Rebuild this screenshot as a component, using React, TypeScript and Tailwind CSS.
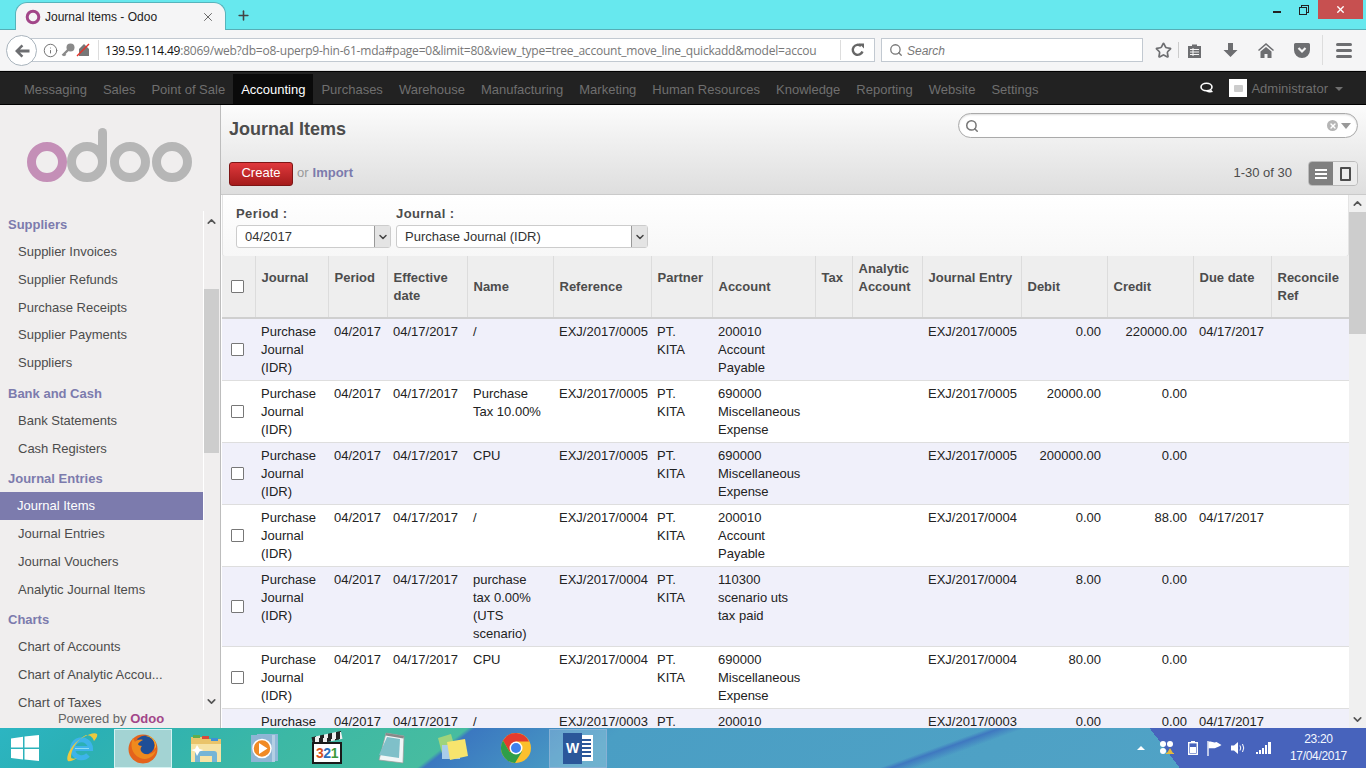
import { ChevronDown, ChevronUp, Info, Search, Star, X, Plus } from 'lucide-react'

const NAV_ITEMS = [
  'Messaging', 'Sales', 'Point of Sale', 'Accounting', 'Purchases', 'Warehouse', 'Manufacturing',
  'Marketing', 'Human Resources', 'Knowledge', 'Reporting', 'Website', 'Settings',
]

const COLUMNS = [
  { label: 'Journal', width: 'w-[73px]', top: 'pt-[13px]' },
  { label: 'Period', width: 'w-[59px]', top: 'pt-[13px]' },
  { label: 'Effective date', width: 'w-[80px]', top: 'pt-[13px]' },
  { label: 'Name', width: 'w-[86px]', top: 'pt-[22px]' },
  { label: 'Reference', width: 'w-[98px]', top: 'pt-[22px]' },
  { label: 'Partner', width: 'w-[61px]', top: 'pt-[13px]' },
  { label: 'Account', width: 'w-[103px]', top: 'pt-[22px]' },
  { label: 'Tax', width: 'w-[37px]', top: 'pt-[13px]' },
  { label: 'Analytic Account', width: 'w-[70px]', top: 'pt-[4px]' },
  { label: 'Journal Entry', width: 'w-[99px]', top: 'pt-[13px]' },
  { label: 'Debit', width: 'w-[86px]', top: 'pt-[22px]' },
  { label: 'Credit', width: 'w-[86px]', top: 'pt-[22px]' },
  { label: 'Due date', width: 'w-[78px]', top: 'pt-[13px]' },
  { label: 'Reconcile Ref', width: 'w-[78px]', top: 'pt-[13px]' },
]

const ROWS = [
  { name: '/', ref: 'EXJ/2017/0005', account: '200010 Account Payable', debit: '0.00', credit: '220000.00', due: '04/17/2017' },
  { name: 'Purchase Tax 10.00%', ref: 'EXJ/2017/0005', account: '690000 Miscellaneous Expense', debit: '20000.00', credit: '0.00', due: '' },
  { name: 'CPU', ref: 'EXJ/2017/0005', account: '690000 Miscellaneous Expense', debit: '200000.00', credit: '0.00', due: '' },
  { name: '/', ref: 'EXJ/2017/0004', account: '200010 Account Payable', debit: '0.00', credit: '88.00', due: '04/17/2017' },
  { name: 'purchase tax 0.00% (UTS scenario)', ref: 'EXJ/2017/0004', account: '110300 scenario uts tax paid', debit: '8.00', credit: '0.00', due: '' },
  { name: 'CPU', ref: 'EXJ/2017/0004', account: '690000 Miscellaneous Expense', debit: '80.00', credit: '0.00', due: '' },
  { name: '/', ref: 'EXJ/2017/0003', account: '200010 Account Payable', debit: '0.00', credit: '0.00', due: '04/17/2017' },
]

const MENU = [
  { title: 'Suppliers', items: ['Supplier Invoices', 'Supplier Refunds', 'Purchase Receipts', 'Supplier Payments', 'Suppliers'] },
  { title: 'Bank and Cash', items: ['Bank Statements', 'Cash Registers'] },
  { title: 'Journal Entries', items: ['Journal Items', 'Journal Entries', 'Journal Vouchers', 'Analytic Journal Items'] },
  { title: 'Charts', items: ['Chart of Accounts', 'Chart of Analytic Accou...', 'Chart of Taxes'] },
]

function OdooLogo() {
  return (
    <svg width="170" height="58" viewBox="0 0 170 58" fill="none" aria-hidden="true">
      <circle cx="20" cy="38" r="15.5" stroke="#c48fb7" strokeWidth="9" />
      <circle cx="60" cy="38" r="15.5" stroke="#b6b6b6" strokeWidth="9" />
      <path d="M75.500 38V8.500" stroke="#b6b6b6" strokeWidth="9" strokeLinecap="round" />
      <circle cx="103" cy="38" r="15.5" stroke="#b6b6b6" strokeWidth="9" />
      <circle cx="145" cy="38" r="15.5" stroke="#b6b6b6" strokeWidth="9" />
    </svg>
  )
}

function WindowControls() {
  return (
    <div className="flex items-start h-full">
      <div className="w-[8px] h-[2px] bg-[#222] mt-[11px] mr-[18px]" />
      <div className="relative w-[10px] h-[10px] mt-[5px] mr-[9px]">
        <div className="absolute left-[2px] top-0 w-[8px] h-[8px] border border-[#222]" />
        <div className="absolute left-0 top-[2px] w-[8px] h-[8px] border border-[#222] bg-[#67e8ee]" />
      </div>
      <div className="w-[45px] h-[19px] bg-[#c75050] flex items-center justify-center mr-[3px]">
        <X size={11} color="#fff" strokeWidth={3} />
      </div>
    </div>
  )
}

function TabStrip() {
  return (
    <div className="h-[30px] bg-[#67e8ee] border-b border-[#56aeb6] flex items-end justify-between shrink-0">
      <div className="flex items-end h-full">
        <div className="ml-[15px] w-[211px] h-[28px] -mb-px bg-[#f5f5f6] rounded-t-[12px] border-t border-x border-[#56b4bc] border-b-0 flex items-center pl-[9px] pr-[10px]">
          <svg width="16" height="16" viewBox="0 0 16 16" fill="none" aria-hidden="true">
            <circle cx="8" cy="8" r="5.8" stroke="#a24689" strokeWidth="3" />
          </svg>
          <span className="ml-[4px] text-[12px] text-[#222] flex-1">Journal Items - Odoo</span>
          <X size={14} color="#555" strokeWidth={1.5} />
        </div>
        <div className="ml-[10px] h-[28px] flex items-center">
          <Plus size={15} color="#444" strokeWidth={2.5} />
        </div>
      </div>
      <WindowControls />
    </div>
  )
}

function Toolbar() {
  return (
    <div className="h-[41px] bg-[#f5f5f6] flex items-center shrink-0 relative pl-[30px] pr-[9px] border-b border-[#e0e0e0]">
      {/* back button sits over the left end of the url bar */}
      <div className="absolute left-[6px] top-[5px] w-[31px] h-[31px] rounded-full bg-white border border-[#a9b4bd] flex items-center justify-center z-10">
        <svg width="16" height="14" viewBox="0 0 16 14" aria-hidden="true">
          <path d="M7.5 0.5L1 7l6.5 6.5 1.8-1.8L6 8.6h9.5V5.4H6l3.3-3.1z" fill="#6d6e71" />
        </svg>
      </div>
      <div className="w-[845px] h-[24px] bg-white border border-[#c2c9d1] flex items-center pl-[12px]">
        <Info size={15} color="#777" strokeWidth={1.6} />
        <svg width="14" height="14" viewBox="0 0 14 14" className="ml-[3px]" aria-hidden="true">
          <circle cx="9.500" cy="4.500" r="4" fill="#8a8a8a" />
          <path d="M7.500 6.500L1.500 12.500M3 11l1.500 1.500" stroke="#8a8a8a" strokeWidth="2.400" />
        </svg>
        <svg width="16" height="14" viewBox="0 0 16 14" className="ml-px" aria-hidden="true">
          <path d="M3 13V6l5-5 5 5v7z" fill="#777" />
          <path d="M1 13L13 1" stroke="#e5332a" strokeWidth="1.5" />
        </svg>
        <div className="w-px h-[20px] bg-[#ddd] ml-[6px]" />
        <div className="w-[712px] ml-[6px] pt-px whitespace-nowrap overflow-hidden text-[12px] text-[#777] font-['Open_Sans',sans-serif] tracking-[-0.22px]">
          <span className="text-[#111]">139.59.114.49</span>
          :8069/web?db=o8-uperp9-hin-61-mda#page=0&amp;limit=80&amp;view_type=tree_account_move_line_quickadd&amp;model=accou
        </div>
        <div className="w-px h-[20px] bg-[#ddd] ml-auto" />
        <div className="w-[33px] flex justify-center">
          <svg width="14" height="14" viewBox="0 0 14 14" fill="none" aria-hidden="true">
            <path d="M11.5 8.5A5 5 0 1 1 10 3" stroke="#666" strokeWidth="2.4" />
            <path d="M8 0.5h5v5z" fill="#666" />
          </svg>
        </div>
      </div>
      <div className="ml-[6px] w-[262px] h-[24px] bg-white border border-[#c2c9d1] flex items-center pl-[7px]">
        <Search size={14} color="#777" strokeWidth={2.2} />
        <span className="ml-[4px] pt-px text-[12px] italic text-[#777]">Search</span>
      </div>
      <Star size={17} color="#6d6e71" strokeWidth={2.4} className="ml-[12px]" />
      <div className="w-px h-[16px] bg-[#ccc] ml-[6px]" />
      <svg width="15" height="15" viewBox="0 0 15 15" className="ml-[8px]" aria-hidden="true">
        <path d="M1 3h4V1.500h5V3h4v12H1z" fill="#6d6e71" />
        <path d="M3 6.500h9M3 9h9M3 11.500h9M6 5v8" stroke="#f5f5f6" strokeWidth="1" />
      </svg>
      <svg width="15" height="16" viewBox="0 0 15 16" className="ml-[21px]" aria-hidden="true">
        <path d="M5 1h5v7h4.500l-7 7-7-7H5z" fill="#6d6e71" />
      </svg>
      <svg width="16" height="15" viewBox="0 0 16 15" className="ml-[20px]" aria-hidden="true">
        <path d="M8 0L0 7l1 1 7-6 7 6 1-1zM2.500 8.500L8 4l5.500 4.500V15H9.500v-4h-3v4h-4z" fill="#6d6e71" />
      </svg>
      <svg width="16" height="15" viewBox="0 0 16 15" className="ml-[20px]" aria-hidden="true">
        <path d="M1.500 0h13A1.500 1.500 0 0 1 16 1.500V7A8 8 0 0 1 0 7V1.500A1.500 1.500 0 0 1 1.500 0z" fill="#6d6e71" />
        <path d="M4.500 5L8 8.500 11.500 5" fill="none" stroke="#f5f5f6" strokeWidth="2.200" />
      </svg>
      <div className="w-px h-[30px] bg-[#ddd] ml-[12px]" />
      <div className="ml-[13px] flex flex-col gap-[3px]">
        <div className="w-[16px] h-[3px] rounded-sm bg-[#6d6e71]" />
        <div className="w-[16px] h-[3px] rounded-sm bg-[#6d6e71]" />
        <div className="w-[16px] h-[3px] rounded-sm bg-[#6d6e71]" />
      </div>
    </div>
  )
}

function AppNav() {
  return (
    <div className="h-[34px] bg-[#222] border-y border-black flex items-stretch shrink-0 pl-[16px] pr-[23px] text-[13px]">
      {NAV_ITEMS.map((item) => (
        <div
          key={item}
          className={item === 'Accounting'
            ? 'px-[8px] mt-[2px] pt-px flex items-center bg-[#0a0a0a] text-white'
            : 'px-[8px] mt-[2px] pt-px flex items-center text-[#6f6f6f]'}
        >
          {item}
        </div>
      ))}
      <div className="ml-auto flex items-center">
        <svg width="14" height="12" viewBox="0 0 14 12" aria-hidden="true">
          <ellipse cx="6.500" cy="5" rx="5.500" ry="3.800" fill="#222" stroke="#fff" strokeWidth="1.600" />
          <path d="M6 9.500c3 1.500 5.500 1 7 .5l-1.500-2z" fill="#fff" />
        </svg>
        <div className="ml-[15px] w-[18px] h-[18px] bg-white flex items-center justify-center">
          <div className="w-[9px] h-[7px] bg-[#ccc] rounded-[1px]" />
        </div>
        <span className="ml-[4px] pt-px text-[#6f6f6f]">Administrator</span>
        <span className="ml-[7px] mt-[2px] w-0 h-0 border-x-[4px] border-x-transparent border-t-[4px] border-t-[#6f6f6f]" />
      </div>
    </div>
  )
}

function Sidebar() {
  return (
    <div className="w-[221px] shrink-0 bg-[#f0eeee] border-r border-[#bdbdbd] flex flex-col">
      <div className="h-[106px] shrink-0 pl-[27px] pt-[19px]">
        <OdooLogo />
      </div>
      <div className="h-[499px] flex overflow-hidden">
        <div className="w-[203px] shrink-0 overflow-hidden pt-px">
          {MENU.map((group) => (
            <div key={group.title} className="mb-[4px]">
              <div className="h-[26px] pl-[8px] text-[13px] font-bold leading-[26px] text-[#7c7bad]">{group.title}</div>
              {group.items.map((item, i) => (
                <div
                  key={item}
                  className={group.title === 'Journal Entries' && i === 0
                    ? 'h-[27.75px] pl-[17px] text-[13px] leading-[27.75px] bg-[#7c7bad] text-white'
                    : 'h-[27.75px] pl-[18px] text-[13px] leading-[27.75px] text-[#4c4c4c]'}
                >
                  {item}
                </div>
              ))}
            </div>
          ))}
        </div>
        <div className="w-[16px] shrink-0 border-l border-white flex flex-col items-center">
          <ChevronUp size={13} color="#555" strokeWidth={3} className="mt-[4px]" />
          <div className="w-full h-[164px] mt-[61px] bg-[#cdcdcd]" />
          <ChevronDown size={13} color="#555" strokeWidth={3} className="mt-auto mb-[2px]" />
        </div>
      </div>
      <div className="text-center text-[13px] leading-[17px] text-[#666] pl-[2px]">
        Powered by <span className="font-bold text-[#a24689]">Odoo</span>
      </div>
    </div>
  )
}

function Checkbox() {
  return <div className="w-[13px] h-[13px] border border-[#777] bg-white rounded-[1px] ml-[9px]" />
}

function FilterSelect({ value, width }: { value: string; width: string }) {
  return (
    <div className={`${width} h-[23px] bg-white border border-[#ccc] rounded-[3px] flex items-center justify-between text-[#333]`}>
      <span className="pl-[8px] text-[13px]">{value}</span>
      <div className="w-[16px] h-[21px] bg-[#e4e4e4] border-l border-[#999] flex items-center justify-center">
        <ChevronDown size={12} color="#444" strokeWidth={3} />
      </div>
    </div>
  )
}

function JournalTable() {
  const cell = 'align-top pt-[4px] pb-[3px] px-[6px]'
  return (
    <table className="table-fixed w-[1127px] border-collapse text-[13px] leading-[18px] text-[#222]">
      <thead>
        <tr className="h-[62px] bg-[#eeeeee] border-b-2 border-[#cfcfcf]">
          <th className="w-[33px] border-r border-[#dcdcdc] align-middle font-normal"><Checkbox /></th>
          {COLUMNS.map((col) => (
            <th
              key={col.label}
              className={`${col.width} ${col.top} align-top px-[6px] text-left font-bold text-[#4c4c4c] border-r border-[#dcdcdc] last:border-r-0`}
            >
              {col.label}
            </th>
          ))}
        </tr>
      </thead>
      <tbody>
        {ROWS.map((row, i) => (
          <tr key={i} className={i % 2 === 0 ? 'bg-[#f0f0fa] border-b border-[#dedede]' : 'bg-white border-b border-[#dedede]'}>
            <td className="align-middle"><Checkbox /></td>
            <td className={cell}>Purchase Journal (IDR)</td>
            <td className={cell}>04/2017</td>
            <td className={cell}>04/17/2017</td>
            <td className={cell}>{row.name}</td>
            <td className={cell}>{row.ref}</td>
            <td className={cell}>PT. KITA</td>
            <td className={cell}>{row.account}</td>
            <td />
            <td />
            <td className={cell}>{row.ref}</td>
            <td className={`${cell} text-right`}>{row.debit}</td>
            <td className={`${cell} text-right`}>{row.credit}</td>
            <td className={cell}>{row.due}</td>
            <td />
          </tr>
        ))}
      </tbody>
    </table>
  )
}

function MainHeader() {
  return (
    <div className="h-[90px] shrink-0 bg-gradient-to-b from-[#fcfcfc] to-[#dedede] border-b border-[#cacaca] pl-[8px] pr-[8px] flex flex-col">
      <div className="flex justify-between pt-[8px] h-[56px]">
        <h1 className="text-[18px] font-bold text-[#4c4c4c] leading-[32px]">Journal Items</h1>
        <div className="w-[400px] h-[25px] bg-white rounded-full border border-[#aaa] shadow-[inset_0_1px_2px_#ddd] flex items-center justify-between px-[6px]">
          <Search size={14} color="#777" strokeWidth={2.6} />
          <div className="flex items-center gap-[3px]">
            <div className="w-[11px] h-[11px] rounded-full bg-[#b5b5b5] flex items-center justify-center">
              <X size={8} color="#fff" strokeWidth={4} />
            </div>
            <span className="w-0 h-0 border-x-[5px] border-x-transparent border-t-[6px] border-t-[#999]" />
          </div>
        </div>
      </div>
      <div className="flex items-center justify-between">
        <div className="flex items-center text-[13px]">
          <div className="w-[64px] h-[24px] pb-px rounded-[3px] border border-[#7d1515] bg-gradient-to-b from-[#e0383c] to-[#a51b1b] text-white flex items-center justify-center">
            Create
          </div>
          <span className="ml-[4px] pb-[2px] text-[#999]">or</span>
          <span className="ml-[4px] pb-[2px] font-bold text-[#7c7bad]">Import</span>
        </div>
        <div className="flex items-center">
          <span className="pb-[2px] text-[13px] text-[#4c4c4c]">1-30 of 30</span>
          <div className="ml-[16px] h-[25px] w-[50px] flex rounded-[4px] border border-[#bbb] overflow-hidden">
            <div className="w-[24px] bg-[#808080] flex flex-col items-center justify-center gap-[2px]">
              <div className="w-[12px] h-[2px] bg-white" />
              <div className="w-[12px] h-[2px] bg-white" />
              <div className="w-[12px] h-[2px] bg-white" />
            </div>
            <div className="flex-1 bg-[#ececec] flex items-center justify-center">
              <div className="w-[11px] h-[14px] border-2 border-[#4c4c4c] rounded-[1px]" />
            </div>
          </div>
        </div>
      </div>
    </div>
  )
}

function MainContent() {
  return (
    <div className="flex-1 min-w-0 flex flex-col bg-white">
      <MainHeader />
      <div className="flex-1 min-h-0 flex">
        <div className="w-[1128px] overflow-hidden">
          <div className="ml-px h-[62px] border border-t-0 border-[#e4e4e4] rounded-b-[3px] bg-gradient-to-b from-white to-[#f7f7f7] pl-[13px] pt-[10px] flex gap-[5px]">
            <div>
              <div className="text-[13px] font-bold text-[#4c4c4c] leading-[18px] mb-[2px] tracking-[0.4px]">Period :</div>
              <FilterSelect value="04/2017" width="w-[155px]" />
            </div>
            <div>
              <div className="text-[13px] font-bold text-[#4c4c4c] leading-[18px] mb-[2px] tracking-[0.4px]">Journal :</div>
              <FilterSelect value="Purchase Journal (IDR)" width="w-[252px]" />
            </div>
          </div>
          <div className="ml-px -mt-px">
            <JournalTable />
          </div>
        </div>
        <div className="w-[17px] shrink-0 bg-[#f0f0f0] flex flex-col items-center">
          <div className="h-[17px] flex items-center justify-center">
            <ChevronUp size={13} color="#555" strokeWidth={3} />
          </div>
          <div className="w-full h-[122px] bg-[#cdcdcd]" />
          <div className="mt-auto h-[17px] flex items-center justify-center">
            <ChevronDown size={13} color="#555" strokeWidth={3} />
          </div>
        </div>
      </div>
    </div>
  )
}

function TaskIcons() {
  return (
    <div className="flex items-center">
      {/* Windows */}
      <svg width="28" height="26" viewBox="0 0 28 26" className="ml-[11px]" aria-hidden="true">
        <path d="M0 3.500l12-1.700V12.500H0zM13.500 1.600L28 0v12.500H13.500zM0 14h12v10.500L0 23zM13.500 14H28v12l-14.500-1.600z" fill="#fff" />
      </svg>
      {/* Internet Explorer */}
      <svg width="32" height="32" viewBox="0 0 32 32" className="ml-[27px]" aria-hidden="true">
        <path d="M7 16.500h17.500A9 9 0 1 0 22 23" fill="none" stroke="#3db4ea" strokeWidth="5" />
        <path d="M9 16.500h14" stroke="#8fdcf7" strokeWidth="1" />
        <path d="M2 29C-1 26 5 12 16 6c7-4 13-6 15-4 1 1.500-1 5-3 7-1-3-3-6-8-6-8 4-15 14-15 22 0 2 3 2 6 1-3 2-7 4-9 3z" fill="#edc93f" />
      </svg>
      {/* Firefox, active */}
      <div className="ml-[16px] w-[58px] h-[39px] bg-[#a3d3d3] border border-[#d4f2f2] flex items-center justify-center">
        <svg width="30" height="31" viewBox="0 0 30 31" aria-hidden="true">
          <circle cx="15" cy="16" r="14.500" fill="#e4631c" />
          <circle cx="17" cy="12" r="9.500" fill="#1f4e96" />
          <path d="M18 3a10 10 0 0 1 9 9c0 3-1 5-2 6l3-4c1-5-4-12-10-11z" fill="#f7b32b" />
          <path d="M5 5C2 11 3 21 12 25c7 3 14-1 16-8-3 4-9 6-13 3-3-2-3-5-1-7-2 0-4-1-4-2 1-2 3-3 5-4-3-1-7 0-8 2z" fill="#ef8a1d" />
        </svg>
      </div>
      {/* Explorer */}
      <svg width="32" height="30" viewBox="0 0 32 30" className="ml-[18px]" aria-hidden="true">
        <path d="M1 4h11l2 2h17v22H1z" fill="#e9c46a" />
        <rect x="3" y="2" width="7" height="3" fill="#5fae4e" />
        <rect x="12" y="3" width="7" height="3" fill="#d84a3a" />
        <rect x="21" y="5" width="7" height="3" fill="#3d8fd6" />
        <path d="M1 11h30v18H1z" fill="#f6e3a5" />
        <path d="M5 29v-8q0-3 3-3h16q3 0 3 3v8h-5v-6H10v6z" fill="#75b5d6" />
        <path d="M7 12l2.500 4 4 1-4 1.500L7 23l-2-4.500-4-1.500 4-1z" fill="#fff" />
      </svg>
      {/* Media player */}
      <svg width="28" height="32" viewBox="0 0 28 32" className="ml-[29px]" aria-hidden="true">
        <rect x="6" y="2" width="21" height="27" fill="#8fb7d8" />
        <rect x="3" y="3" width="21" height="27" fill="#b4cfe4" />
        <rect x="0" y="3" width="21" height="27" fill="#8fb5d4" />
        <circle cx="11" cy="16.500" r="9" fill="#f08a24" stroke="#fff" strokeWidth="1.500" />
        <path d="M8 11l8.500 5.500L8 22z" fill="#fff" />
      </svg>
      {/* Media Player Classic */}
      <div className="ml-[33px] w-[30px] h-[32px] relative">
        <div className="absolute top-[2px] left-0 w-full h-[8px] bg-[repeating-linear-gradient(110deg,#222_0_4px,#eee_4px_8px)] -rotate-12" />
        <div className="absolute bottom-0 left-0 w-full h-[22px] bg-white border-2 border-[#1a1a1a] flex items-center justify-center text-[14px] leading-[18px] font-bold tracking-[-0.5px]">
          <span className="text-[#d9541e]">3</span>
          <span className="text-[#2a6fbe]">2</span>
          <span className="text-[#3b9a3a]">1</span>
        </div>
      </div>
      {/* Notepad */}
      <svg width="30" height="32" viewBox="0 0 30 32" className="ml-[34px]" aria-hidden="true">
        <path d="M10 1l18 3-1 27-24-3z" fill="#f1f6f7" stroke="#999" strokeWidth="0.700" />
        <path d="M11 5l13 2-1 19L3 23z" fill="#7fc0c9" />
        <path d="M10 1l18 3-.5 2.500-18-3z" fill="#888" />
      </svg>
      {/* Sticky notes */}
      <svg width="34" height="30" viewBox="0 0 34 30" className="ml-[30px]" aria-hidden="true">
        <path d="M2 5l13-4 5 18-13 5z" fill="#9ed47c" />
        <path d="M6 12h18v14H6z" fill="#a9cdea" />
        <path d="M11 9l18-3 3 17-18 4z" fill="#f7e46d" />
      </svg>
      {/* Chrome */}
      <svg width="30" height="30" viewBox="-15 -15 30 30" className="ml-[31px]" aria-hidden="true">
        <circle r="15" fill="#fbc02d" />
        <path d="M0 -15A15 15 0 0 0 -13 -7.500L-6.500 3.800 0 -6.500H13A15 15 0 0 0 0 -15z" fill="#e33b2e" />
        <path d="M-13 -7.500A15 15 0 0 0 -1 15L6 3.500-6.500 3.800z" fill="#2f9e48" />
        <circle r="6.500" fill="#fff" />
        <circle r="5" fill="#3f81ee" />
      </svg>
      {/* Word, active */}
      <div className="ml-[18px] w-[58px] h-[39px] bg-[#ffffff33] border border-[#87b1d4] flex items-center justify-center relative">
        <div className="w-[17px] h-[26px] bg-white ml-[13px] flex flex-col justify-center gap-[2px] pl-[5px] pr-[2px]">
          <div className="h-[2px] bg-[#2b579a]" />
          <div className="h-[2px] bg-[#2b579a]" />
          <div className="h-[2px] bg-[#2b579a]" />
          <div className="h-[2px] bg-[#2b579a]" />
          <div className="h-[2px] bg-[#2b579a]" />
        </div>
        <div className="absolute left-[13px] top-[3px] w-[19px] h-[31px] bg-[#2b579a] text-white text-[14px] font-bold leading-[31px] text-center">W</div>
      </div>
    </div>
  )
}

function Tray() {
  return (
    <div className="flex items-center pr-[19px]">
      <span className="w-0 h-0 border-x-[4px] border-x-transparent border-b-[4px] border-b-white" />
      <svg width="16" height="16" viewBox="0 0 16 16" className="ml-[14px]" aria-hidden="true">
        <circle cx="4" cy="4" r="3" fill="#fff" />
        <circle cx="11" cy="4" r="3" fill="#fff" />
        <circle cx="4" cy="11" r="3" fill="#fff" />
        <path d="M11 8l3 5h1v1H7v-1h1z" fill="#e4b93c" />
      </svg>
      <svg width="10" height="14" viewBox="0 0 10 14" className="ml-[13px]" aria-hidden="true">
        <rect x="3" y="0" width="4" height="2" fill="#fff" />
        <rect x="0.700" y="1.700" width="8.600" height="11.600" fill="none" stroke="#fff" strokeWidth="1.400" />
        <rect x="2" y="6" width="6" height="6" fill="#fff" />
      </svg>
      <svg width="15" height="15" viewBox="0 0 15 15" className="ml-[9px]" aria-hidden="true">
        <path d="M1 0v15" stroke="#fff" strokeWidth="1.300" />
        <path d="M1.500 1c3-1.500 5 1.500 8 0l5 3c-3 2-5 2-6 3-2 1-5-.5-7 .5z" fill="#fff" />
      </svg>
      <svg width="15" height="14" viewBox="0 0 15 14" className="ml-[9px]" aria-hidden="true">
        <path d="M0 4.500h3L7 1v12L3 9.500H0z" fill="#fff" />
        <path d="M9 4.500q1.500 2.500 0 5M11.500 3q2.500 4 0 8" fill="none" stroke="#fff" strokeWidth="1" />
      </svg>
      <div className="ml-[10px] flex items-end gap-px h-[12px]">
        <div className="w-[2px] h-[2px] bg-white" />
        <div className="w-[2px] h-[4px] bg-white" />
        <div className="w-[2px] h-[6px] bg-white" />
        <div className="w-[2px] h-[9px] bg-white" />
        <div className="w-[3px] h-[12px] bg-white" />
      </div>
      <div className="ml-[19px] text-center text-[12px] leading-[17px] tracking-[-0.3px] text-[#f4f8ff]">
        <div>23:20</div>
        <div>17/04/2017</div>
      </div>
    </div>
  )
}

export default function App() {
  return (
    <div className="h-screen w-full overflow-hidden flex flex-col font-['Liberation_Sans',sans-serif]">
      <TabStrip />
      <Toolbar />
      <AppNav />
      <div className="flex-1 min-h-0 flex">
        <Sidebar />
        <MainContent />
      </div>
      <div className="h-[40px] shrink-0 flex items-center justify-between bg-[linear-gradient(53deg,transparent_84.5%,#4763bc_84.5%),linear-gradient(160deg,transparent_67%,#3f78c0_67.8%,transparent_69.5%),linear-gradient(142deg,#2cb5c2_0%,#2bb0b5_7%,#3cb8a5_21%,#47bca0_33%,#3b78c0_33.5%,#4a9ec4_44%,#52a4c6_100%)]">
        <TaskIcons />
        <Tray />
      </div>
    </div>
  )
}
